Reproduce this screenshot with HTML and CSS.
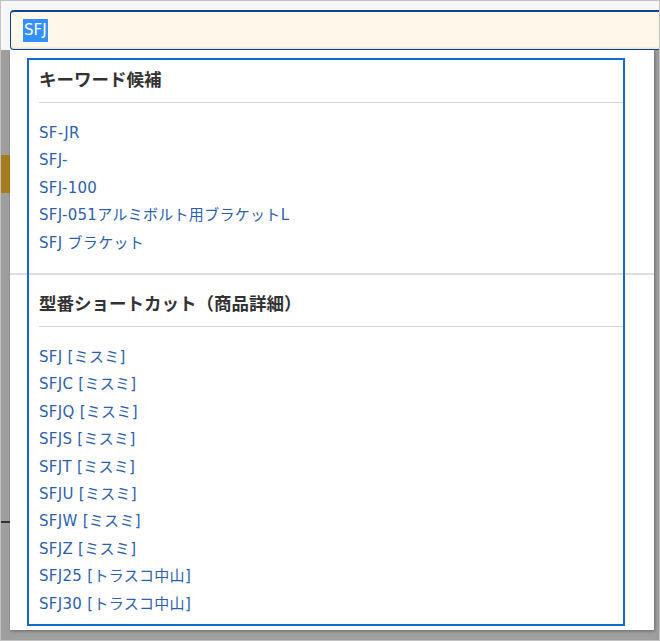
FILE: index.html
```html
<!DOCTYPE html>
<html>

<head>
  <meta charset="UTF-8">
  <meta name="viewport" content="width=device-width, initial-scale=1.0">
  <title>SFJ</title>
  <link rel="stylesheet" href="styles.css">
</head>

<body>
  <div class="frame">
    <div class="topbar">
      <div class="search-box">
        <span class="query">SFJ</span>
      </div>
    </div>

    <div class="side side-left">
      <span class="side-mark side-mark-1"></span>
      <span class="side-mark side-mark-2"></span>
    </div>

    <div class="suggest">
      <div class="suggest-ring"></div>

      <div class="suggest-section">
        <h2 class="suggest-title">キーワード候補</h2>
        <ul class="suggest-list">
          <li><a href="#">SF-JR</a></li>
          <li><a href="#">SFJ-</a></li>
          <li><a href="#">SFJ-100</a></li>
          <li><a href="#">SFJ-051アルミボルト用ブラケットL</a></li>
          <li><a href="#">SFJ ブラケット</a></li>
        </ul>
      </div>

      <div class="suggest-section suggest-section-2">
        <h2 class="suggest-title">型番ショートカット（商品詳細）</h2>
        <ul class="suggest-list">
          <li><a href="#">SFJ [ミスミ]</a></li>
          <li><a href="#">SFJC [ミスミ]</a></li>
          <li><a href="#">SFJQ [ミスミ]</a></li>
          <li><a href="#">SFJS [ミスミ]</a></li>
          <li><a href="#">SFJT [ミスミ]</a></li>
          <li><a href="#">SFJU [ミスミ]</a></li>
          <li><a href="#">SFJW [ミスミ]</a></li>
          <li><a href="#">SFJZ [ミスミ]</a></li>
          <li><a href="#">SFJ25 [トラスコ中山]</a></li>
          <li><a href="#">SFJ30 [トラスコ中山]</a></li>
        </ul>
      </div>
    </div>
  </div>
</body>

</html>
```

FILE: styles.css
```css
* {
  box-sizing: border-box;
}

body {
  margin: 0;
  font-family: "DejaVu Sans", "Noto Sans CJK JP", sans-serif;
}

.frame {
  position: relative;
  width: 660px;
  height: 641px;
  overflow: hidden;
  border: 1px solid #c2c2c2;
  background: #9e9e9e;
}

.topbar {
  height: 49px;
  padding: 9px 0 0 9px;
  background: #f6f6f6;
}

.search-box {
  display: flex;
  align-items: center;
  width: 700px;
  height: 40px;
  padding-left: 12px;
  border: 1px solid #0f4396;
  border-top-width: 2px;
  border-radius: 4px 0 0 4px;
  background: #fff7ea;
  box-shadow: inset 0 -2px 2px rgba(0, 0, 0, 0.06);
}

.query {
  padding: 2px 1px;
  color: #fff;
  background: #3390ff;
  font-size: 15px;
  line-height: 19px;
}

.side-left {
  position: absolute;
  top: 88px;
  left: 0;
  width: 9px;
  height: 540px;
}

.side-mark {
  position: absolute;
  left: 0;
  width: 9px;
}

.side-mark-1 {
  top: 66px;
  height: 38px;
  background: #a77c1c;
}

.side-mark-2 {
  top: 432px;
  height: 2px;
  background: #333;
}

.suggest {
  position: relative;
  width: 644px;
  height: 580px;
  margin-left: 9px;
  background: #fff;
  box-shadow: 1px 1px 3px rgba(0, 0, 0, 0.35);
}

.suggest-ring {
  position: absolute;
  top: 8px;
  left: 17px;
  width: 598px;
  height: 568px;
  border: 2px solid #1169d2;
  pointer-events: none;
}

.suggest-section {
  padding: 18px 31px 16px 29px;
}

.suggest-section-2 {
  padding-top: 17px;
  padding-bottom: 0;
  border-top: 2px solid #dedede;
}

.suggest-title {
  margin: 0;
  padding-bottom: 10px;
  border-bottom: 1px solid #d4d4d4;
  color: #333;
  font-size: 17.5px;
  font-weight: bold;
  line-height: 24px;
}

.suggest-list {
  margin: 17px 0 0;
  padding: 0;
  list-style: none;
}

.suggest-list li {
  font-size: 15px;
  letter-spacing: 0.3px;
  line-height: 27.4px;
}

.suggest-list a {
  color: #2d5fae;
  text-decoration: none;
}
```
